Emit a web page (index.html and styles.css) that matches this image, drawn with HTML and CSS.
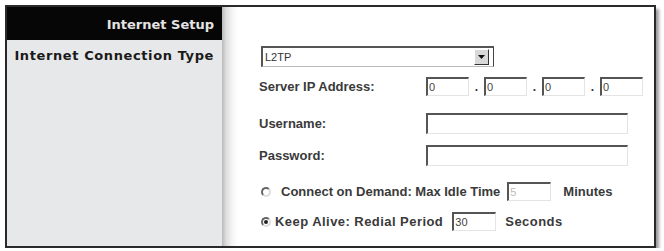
FILE: index.html
```html
<!DOCTYPE html>
<html>
<head>
<meta charset="utf-8">
<link rel="stylesheet" href="styles.css">
</head>
<body>
<div class="frame">
  <div class="side">
    <div class="side-head">Internet Setup</div>
    <div class="side-label">Internet Connection Type</div>
  </div>
  <div class="main">
    <div class="row row-select">
      <div class="select"><span class="sel-text">L2TP</span><span class="sel-btn"><svg width="7" height="4" viewBox="0 0 7 4"><path d="M0 0h7L3.5 4z" fill="#111"/></svg></span></div>
    </div>
    <div class="row row-ip">
      <span class="label">Server IP Address:</span>
      <div class="ip">
        <span class="field f-ip">0</span><span class="dot">.</span>
        <span class="field f-ip">0</span><span class="dot">.</span>
        <span class="field f-ip">0</span><span class="dot">.</span>
        <span class="field f-ip">0</span>
      </div>
    </div>
    <div class="row row-user">
      <span class="label">Username:</span>
      <span class="field f-long"></span>
    </div>
    <div class="row row-pass">
      <span class="label">Password:</span>
      <span class="field f-long"></span>
    </div>
    <div class="row row-demand">
      <span class="radio"></span>
      <span class="rtext">Connect on Demand: Max Idle Time</span>
      <span class="field f-small dim">5</span>
      <span class="rtext">Minutes</span>
    </div>
    <div class="row row-alive">
      <span class="radio on"></span>
      <span class="rtext">Keep Alive: Redial Period</span>
      <span class="field f-small">30</span>
      <span class="rtext">Seconds</span>
    </div>
  </div>
</div>
</body>
</html>
```
FILE: styles.css
```css
html, body {
  margin: 0;
  padding: 0;
  background: #ffffff;
}
body {
  font-family: "Liberation Sans", Arial, sans-serif;
  font-weight: bold;
  color: #333;
}
.frame {
  position: relative;
  margin: 5px 0 0 5px;
  width: 647px;
  height: 239px;
  border: 2px solid #2a2a2a;
  display: flex;
  box-shadow: 3px 4px 3px #9a9a9a;
  background: #fff;
}
.side {
  width: 215px;
  flex: none;
  background: #e7e8e9;
  display: flex;
  flex-direction: column;
}
.side-head {
  height: 33px;
  background: #060606;
  color: #e4e4e4;
  font-family: "DejaVu Sans", sans-serif;
  font-size: 13px;
  text-align: right;
  padding-right: 8px;
  line-height: 35px;
  box-sizing: border-box;
}
.side-label {
  font-family: "DejaVu Sans", sans-serif;
  font-size: 13px;
  letter-spacing: 0.6px;
  color: #1a1a1a;
  text-align: right;
  padding-right: 8px;
  margin-top: 8px;
}
.main {
  flex: 1;
  display: flex;
  flex-direction: column;
  padding: 39px 0 0 37px;
  background: linear-gradient(to right, #b9b9b9 0, #dcdcdc 4px, #f4f4f4 10px, #ffffff 16px);
}
.row {
  display: flex;
  align-items: center;
  font-size: 13px;
}
.label {
  width: 167px;
  flex: none;
  color: #3a3a3a;
}
.select {
  width: 233px;
  height: 21px;
  margin-left: 2px;
  box-sizing: border-box;
  border-top: 2px solid #555;
  border-left: 2px solid #555;
  border-right: 1px solid #444;
  border-bottom: 1px solid #bbb;
  display: flex;
  align-items: center;
  justify-content: space-between;
  background: #fff;
}
.sel-text {
  font-size: 11px;
  font-weight: normal;
  color: #333;
  padding-left: 2px;
}
.sel-btn {
  width: 15px;
  height: 16px;
  margin-right: 4px;
  background: #d8d8d8;
  border-right: 1px solid #333;
  border-bottom: 1px solid #333;
  border-top: 1px solid #fff;
  border-left: 1px solid #fff;
  box-sizing: border-box;
  display: flex;
  align-items: center;
  justify-content: center;
}
.field {
  display: inline-block;
  box-sizing: border-box;
  height: 19px;
  border-top: 2px solid #555;
  border-left: 2px solid #555;
  border-right: 1px solid #e4e4e4;
  border-bottom: 1px solid #e4e4e4;
  background: #fff;
  font-size: 11px;
  font-weight: normal;
  color: #444;
  line-height: 16px;
  padding-left: 1px;
  letter-spacing: 0;
}
.row-ip { margin-top: 10px; }
.ip { display: flex; align-items: center; }
.f-ip { width: 43px; }
.dot {
  width: 15px;
  text-align: center;
  font-size: 12px;
}
.row-user { margin-top: 17px; }
.row-pass { margin-top: 11px; }
.f-long { width: 202px; height: 21px; }
.row-demand { margin-top: 16px; }
.row-alive { margin-top: 11px; letter-spacing: 0.45px; }
.radio {
  width: 10px;
  height: 10px;
  border-radius: 50%;
  box-sizing: border-box;
  border: 2px solid #666;
  border-right-color: #ddd;
  border-bottom-color: #ddd;
  margin: 0 10px 0 2px;
  position: relative;
  background: #fff;
}
.row-alive .radio { margin-right: 4px; }
.radio.on::after {
  content: "";
  position: absolute;
  left: 1px;
  top: 1px;
  width: 4px;
  height: 4px;
  border-radius: 50%;
  background: #222;
}
.rtext { color: #3a3a3a; }
.f-small {
  width: 44px;
  margin: 0 10px 0 7px;
}
.row-demand .f-small { margin-right: 12px; }
.row-alive .f-small { margin-left: 9px; margin-right: 9px; }
.dim { color: #bbb; }
```
